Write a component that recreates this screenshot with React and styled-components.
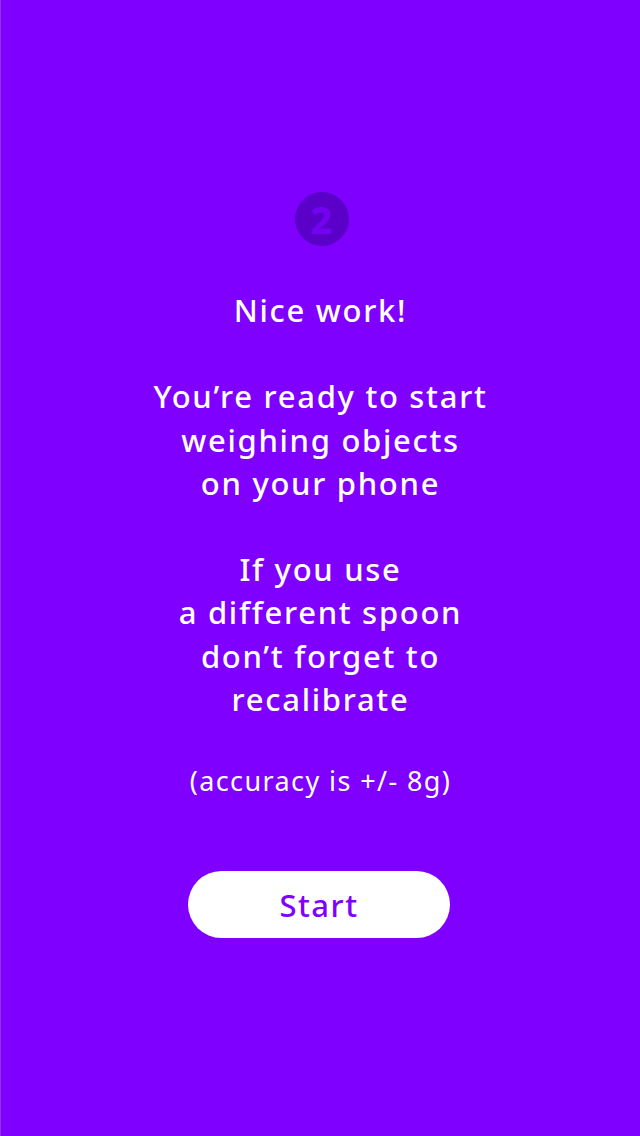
import React from "react";
import styled, { createGlobalStyle } from "styled-components";

const GlobalStyle = createGlobalStyle`
  html, body {
    margin: 0;
    padding: 0;
    background: #7f00ff;
  }
`;

const Screen = styled.div`
  width: 640px;
  height: 1136px;
  box-sizing: border-box;
  background: #7f00ff;
  border-left: 1px solid #8c33ff;
  display: flex;
  flex-direction: column;
  align-items: center;
  padding-top: 192px;
  font-family: "Noto Sans", "Open Sans", sans-serif;
  color: #ffffff;
`;

const StepBadge = styled.div`
  width: 54px;
  height: 54px;
  border-radius: 50%;
  background: #5a00c9;
  color: #7202f0;
  display: flex;
  align-items: center;
  justify-content: center;
  font-size: 38px;
  font-weight: 800;
  line-height: 1;
  margin-left: 2px;
`;

const Message = styled.p`
  margin: 43px 0 0;
  font-size: 31px;
  font-weight: 500;
  letter-spacing: 1.7px;
  line-height: 43.2px;
  text-align: center;
  white-space: pre-line;
`;

const Note = styled.p`
  margin: 43px 0 0;
  font-size: 27px;
  font-weight: 400;
  letter-spacing: 1.4px;
  line-height: 34px;
  text-align: center;
`;

const StartButton = styled.button`
  margin: 73px 3px 0 0;
  width: 262px;
  height: 67px;
  border: none;
  border-radius: 34px;
  background: #ffffff;
  color: #7f00ff;
  font-family: inherit;
  font-size: 31px;
  font-weight: 500;
  letter-spacing: 1.5px;
  cursor: pointer;
`;

const text = `Nice work!

You’re ready to start
weighing objects
on your phone

If you use
a different spoon
don’t forget to
recalibrate`;

const App = () => {
  return (
    <Screen>
      <GlobalStyle />
      <StepBadge>2</StepBadge>
      <Message>{text}</Message>
      <Note>(accuracy is +/- 8g)</Note>
      <StartButton>Start</StartButton>
    </Screen>
  );
};

export default App;
